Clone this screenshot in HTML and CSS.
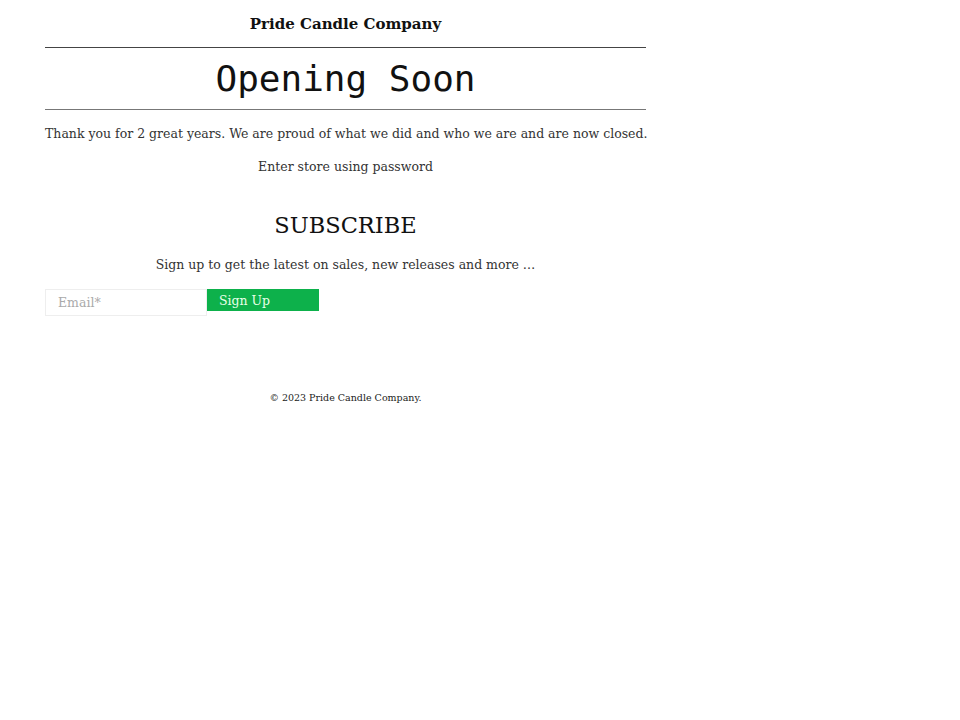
FILE: index.html
```html
<!DOCTYPE html>
<html lang="en">
<head>
<meta charset="utf-8">
<title>Pride Candle Company</title>
<link rel="stylesheet" href="styles.css">
</head>
<body>
<div class="page">
  <header class="brand">Pride Candle Company</header>
  <hr class="rule">
  <h1 class="title">Opening Soon</h1>
  <hr class="rule rule-bottom">
  <p class="message">Thank you for 2 great years. We are proud of what we did and who we are and are now closed.</p>
  <p class="password">Enter store using password</p>
  <section class="subscribe">
    <h2 class="subscribe-title">SUBSCRIBE</h2>
    <p class="subscribe-text">Sign up to get the latest on sales, new releases and more …</p>
    <form class="signup">
      <input class="email" type="email" placeholder="Email*">
      <button class="signup-btn" type="button">Sign Up</button>
    </form>
  </section>
  <footer class="footer">© 2023 Pride Candle Company.</footer>
</div>
</body>
</html>
```
FILE: styles.css
```css
html, body {
  margin: 0;
  padding: 0;
  background: #fff;
}
body {
  font-family: "DejaVu Serif", serif;
  color: #333;
}
.page {
  width: 601px;
  margin-left: 45px;
  text-align: center;
}
.brand {
  display: block;
  font-size: 15px;
  font-weight: bold;
  color: #111;
  height: 47px;
  line-height: 48px;
}
.rule {
  border: 0;
  border-top: 1px solid #444;
  margin: 0;
}
.rule-bottom {
  border-top-color: #777;
}
.title {
  font-family: "DejaVu Sans Mono", monospace;
  font-weight: normal;
  font-size: 36px;
  color: #111;
  margin: 0;
  height: 61px;
  line-height: 61px;
}
.message {
  font-size: 12.5px;
  margin: 16px 0 0;
  white-space: nowrap;
}
.password {
  font-size: 12.5px;
  margin: 18px 0 0;
}
.subscribe {
  margin-top: 38px;
}
.subscribe-title {
  font-weight: normal;
  font-size: 22.5px;
  color: #111;
  margin: 0;
}
.subscribe-text {
  font-size: 12.5px;
  margin: 19px 0 0;
}
.signup {
  display: flex;
  margin-top: 17px;
  align-items: flex-start;
}
.email {
  width: 162px;
  height: 27px;
  box-sizing: border-box;
  border: 1px solid #eee;
  font-family: "DejaVu Serif", serif;
  font-size: 12.5px;
  padding: 0 12px;
  margin: 0;
  outline: none;
}
.email::placeholder {
  color: #aaa;
}
.signup-btn {
  width: 112px;
  height: 22px;
  border: 0;
  background: #0db14b;
  color: #e8ffe8;
  font-family: "DejaVu Serif", serif;
  font-size: 12.5px;
  text-align: left;
  padding: 0 12px;
  margin: 0;
}
.footer {
  font-size: 9.5px;
  color: #222;
  margin-top: 76px;
}
```
